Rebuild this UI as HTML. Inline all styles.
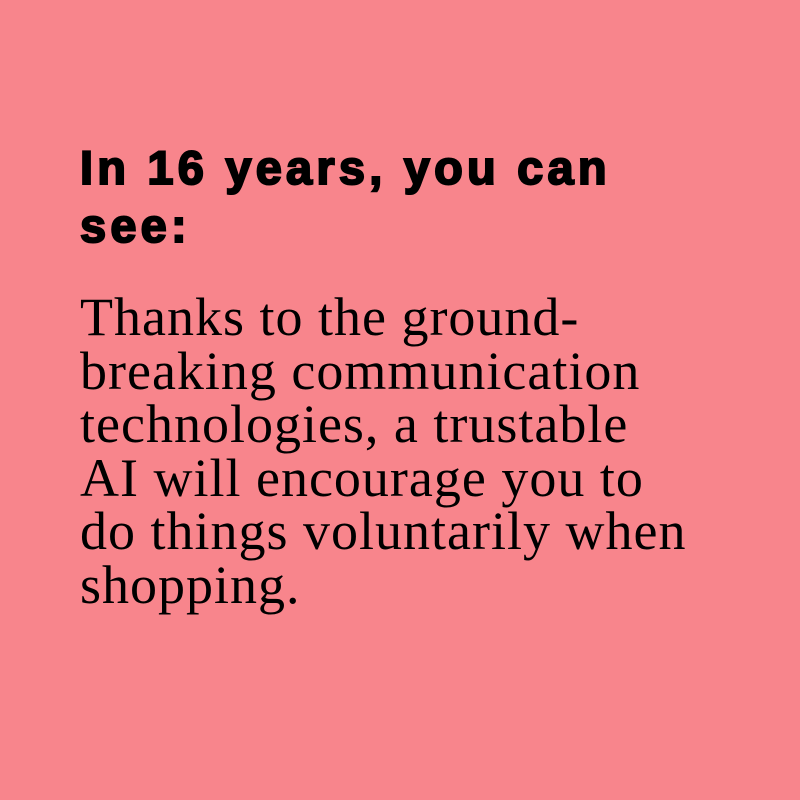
<!DOCTYPE html>
<html><head><style>
html,body{margin:0;padding:0;}
body{width:800px;height:800px;background:#f8858c;position:relative;overflow:hidden;}
h1{position:absolute;left:80px;top:139px;margin:0;width:700px;font-family:"Liberation Sans",sans-serif;font-weight:bold;font-size:47px;line-height:58px;color:#000;-webkit-text-stroke:2px #000;letter-spacing:4.2px;}
p{position:absolute;left:80px;top:291px;margin:0;width:700px;font-family:"Liberation Serif",serif;font-size:54px;line-height:53.6px;color:#000;letter-spacing:1px;}
</style></head><body>
<h1>In 16 years, you can<br>see:</h1>
<p>Thanks to the ground-<br>breaking communication<br>technologies, a trustable<br>AI will encourage you to<br>do things voluntarily when<br>shopping.</p>
</body></html>
